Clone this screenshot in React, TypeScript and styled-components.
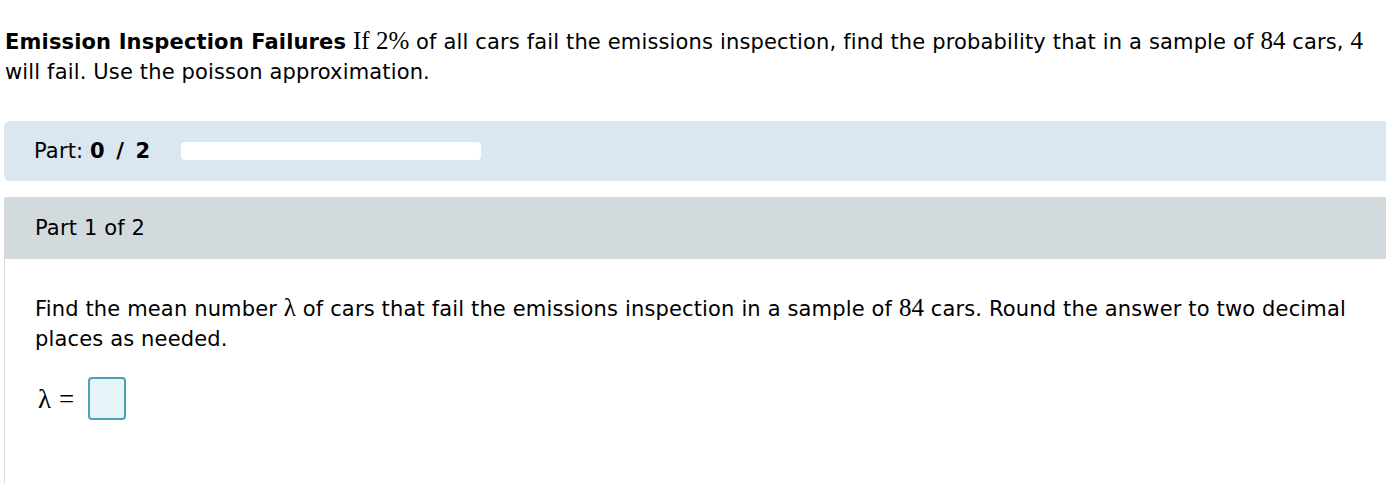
import React from "react";
import styled, { createGlobalStyle } from "styled-components";

const Global = createGlobalStyle`
  html, body { margin: 0; padding: 0; background: #ffffff; }
  body { font-family: "DejaVu Sans", Verdana, sans-serif; color: #000; letter-spacing: 0.15px; }
`;

const Page = styled.div`
  padding: 26px 0 0 4px;
  width: 1400px;
`;

const Problem = styled.p`
  margin: 0 0 34px 1px;
  font-size: 21px;
  line-height: 30px;
  width: 1375px;
`;

const Title = styled.strong`
  font-weight: bold;
`;

const M = styled.span`
  font-family: "Liberation Serif", "DejaVu Serif", "Times New Roman", serif;
  font-size: 25px;
  letter-spacing: 0;
`;

const PartBar = styled.div`
  display: flex;
  align-items: center;
  height: 60px;
  padding-left: 30px;
  background: #dae6f0;
  border-radius: 6px 0 0 6px;
  font-size: 21px;
`;

const PartLabel = styled.span`
  width: 147px;
  white-space: pre;
`;

const Fraction = styled.b`
  word-spacing: 4px;
`;

const Progress = styled.div`
  width: 300px;
  height: 18px;
  background: #ffffff;
  border-radius: 4px;
`;

const Section = styled.section`
  margin-top: 16px;
`;

const SectionHeader = styled.div`
  display: flex;
  align-items: center;
  height: 62px;
  padding-left: 31px;
  background: #d2dadd;
  border-radius: 2px 0 0 0;
  font-size: 21px;
`;

const SectionBody = styled.div`
  border-left: 1px solid #d6dcdf;
  padding: 34px 0 80px 30px;
  font-size: 21px;
  line-height: 30px;
`;

const Question = styled.p`
  margin: 0;
  width: 1330px;
`;

const AnswerRow = styled.div`
  display: flex;
  align-items: center;
  margin-top: 23px;
`;

const Sym = styled.span<{ $gap?: number }>`
  font-family: "Liberation Serif", "DejaVu Serif", "Times New Roman", serif;
  font-size: 27px;
  letter-spacing: 0;
  margin-left: ${(p) => p.$gap ?? 0}px;
`;

const InputBox = styled.div`
  width: 34px;
  height: 39px;
  margin-left: 14px;
  border: 2px solid #4ba2b0;
  border-radius: 4px;
  background: #e6f4f8;
`;

export default function App() {
  return (
    <>
      <Global />
      <Page>
        <Problem>
          <Title>Emission Inspection Failures</Title> <M>If 2%</M> of all cars fail the
          emissions inspection, find the probability that in a sample of <M>84</M> cars, <M>4</M>{" "}
          will fail. Use the poisson approximation.
        </Problem>
        <PartBar>
          <PartLabel>
            Part: <Fraction>0 / 2</Fraction>
          </PartLabel>
          <Progress />
        </PartBar>
        <Section>
          <SectionHeader>Part 1 of 2</SectionHeader>
          <SectionBody>
            <Question>
              Find the mean number <M>λ</M> of cars that fail the emissions inspection in a sample
              of <M>84</M> cars. Round the answer to two decimal places as needed.
            </Question>
            <AnswerRow>
              <Sym $gap={3}>λ</Sym>
              <Sym $gap={8}>=</Sym>
              <InputBox />
            </AnswerRow>
          </SectionBody>
        </Section>
      </Page>
    </>
  );
}
